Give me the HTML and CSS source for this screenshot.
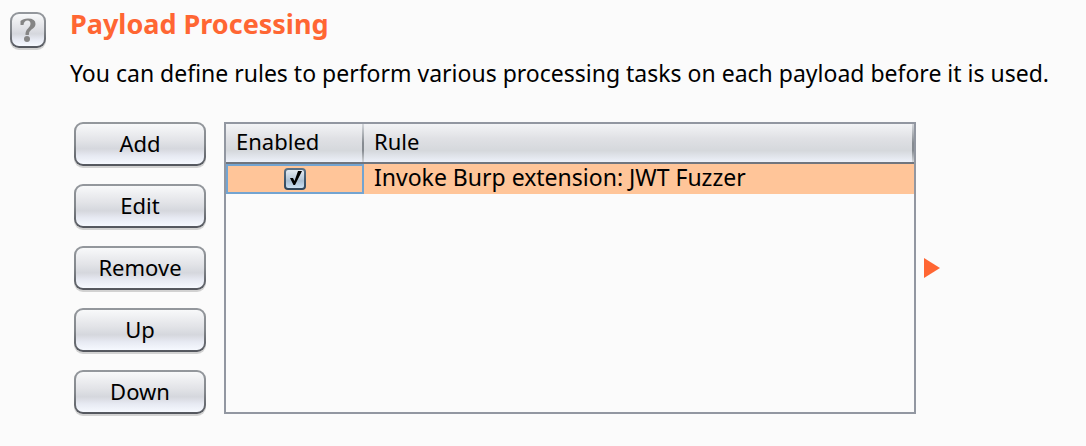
FILE: index.html
```html
<!DOCTYPE html>
<html lang="en">
<head>
<meta charset="utf-8">
<title>Payload Processing</title>
<link rel="stylesheet" href="styles.css">
</head>
<body>
<main class="panel">
  <button class="metal help" type="button" aria-label="Help">
    <svg class="help-icon" viewBox="0 0 16 24" aria-hidden="true">
      <path d="M0.500 7V3Q3 0.500 8 0.500Q15.500 0.500 15.500 6Q15.500 9 11.500 11.500Q8.800 13.300 8.800 17H5.500Q5.200 13 8 10.500Q10.500 8.500 10.500 6Q10.500 2.500 7.500 2.500Q4 2.500 3.500 7Z"/>
      <circle cx="7" cy="21" r="3"/>
    </svg>
  </button>
  <section class="content">
    <h1 class="title">Payload Processing</h1>
    <p class="description">You can define rules to perform various processing tasks on each payload before it is used.</p>
    <div class="editor">
      <div class="actions">
        <button class="metal action" type="button">Add</button>
        <button class="metal action" type="button">Edit</button>
        <button class="metal action" type="button">Remove</button>
        <button class="metal action" type="button">Up</button>
        <button class="metal action" type="button">Down</button>
      </div>
      <div class="rules">
        <table class="rules-table">
          <thead>
            <tr><th class="enabled-column" scope="col">Enabled</th><th scope="col">Rule</th></tr>
          </thead>
          <tbody>
            <tr>
              <td class="enabled-cell">
                <label class="check">
                  <input class="check-input" type="checkbox" checked aria-label="Enable Invoke Burp extension: JWT Fuzzer">
                  <svg class="check-mark" viewBox="0 0 22 22" aria-hidden="true"><path d="M6 10H9L10.500 13L14 3H18L11 17H9.500Z"/></svg>
                </label>
              </td>
              <td>Invoke Burp extension: JWT Fuzzer</td>
            </tr>
          </tbody>
        </table>
      </div>
      <svg class="arrow" viewBox="0 0 16 20" aria-hidden="true"><path d="M0 0L16 10L0 20Z"/></svg>
    </div>
  </section>
</main>
</body>
</html>
```

FILE: styles.css
```css
* {
  box-sizing: border-box;
}

body {
  margin: 0;
  background: #fbfbfb;
  color: #000;
  font: 22px/30px "Noto Sans", "Open Sans", sans-serif;
}

.panel {
  display: flex;
  align-items: flex-start;
  gap: 24px;
  padding: 8px 10px;
}

.content {
  flex: 1;
  min-width: 0;
}

.title {
  margin: 0;
  color: #ff6633;
  font-size: 27px;
  line-height: 32px;
}

.description {
  margin: 18px 0 0;
  font-size: 23px;
}

.metal {
  padding: 0;
  border: 2px solid transparent;
  border-radius: 9px;
  background:
    linear-gradient(#f8f9fa, #e3e4e8 40%, #d5d7dd 62%, #e7eaf3 80%, #f6f9ff) padding-box,
    linear-gradient(#94989d, #83878c 50%, #53565d) border-box;
  box-shadow: 0 2px 0 #d2d2d2;
  color: inherit;
  font: inherit;
}

.help {
  display: flex;
  flex: none;
  align-items: center;
  justify-content: center;
  width: 36px;
  height: 36px;
  margin-top: 4px;
}

.help-icon {
  width: 16px;
  height: 24px;
  fill: #858585;
}

.editor {
  display: flex;
  gap: 18px;
  margin: 34px 136px 0 4px;
}

.actions {
  display: flex;
  flex: none;
  flex-direction: column;
  gap: 18px;
  width: 132px;
}

.action {
  height: 44px;
  padding-bottom: 2px;
}

.rules {
  flex: 1;
  min-width: 0;
  border: 2px solid #9297a1;
}

.rules-table {
  width: 100%;
  border-collapse: separate;
  border-spacing: 0;
  table-layout: fixed;
}

.rules-table th {
  height: 40px;
  padding: 0 12px 4px 10px;
  border-bottom: 2px solid #70757e;
  background:
    linear-gradient(#d5d8dc, #868b91 50%, #868b91 70%, #d5d8dc) right / 2px 100% no-repeat,
    linear-gradient(#f3f4f6, #dfe0e4 40%, #d5d8dc 70%, #edf1fa);
  font-weight: 400;
  text-align: left;
}

.rules-table .enabled-column {
  width: 138px;
}

.rules-table td {
  height: 30px;
  padding: 0 10px 4px;
  background: #ffc599;
  font-size: 23px;
  line-height: 26px;
}

.rules-table .enabled-cell {
  padding: 0;
  border: 2px solid #73a4d1;
}

.check {
  display: grid;
  width: 22px;
  height: 22px;
  margin: 0 auto;
}

.check-input,
.check-mark {
  grid-area: 1 / 1;
  width: 22px;
  height: 22px;
  margin: 0;
}

.check-input {
  appearance: none;
  border: 2px solid transparent;
  border-radius: 4px;
  background:
    linear-gradient(#e4ebf2, #b9c9d9 50%, #a9bfd3 60%, #cbe0f3) padding-box,
    linear-gradient(#5b7287, #2d4358) border-box;
}

.check-mark {
  visibility: hidden;
  pointer-events: none;
}

.check-input:checked + .check-mark {
  visibility: visible;
}

.arrow {
  flex: none;
  align-self: center;
  width: 16px;
  height: 20px;
  margin-left: -10px;
  fill: #ff6633;
}
```
